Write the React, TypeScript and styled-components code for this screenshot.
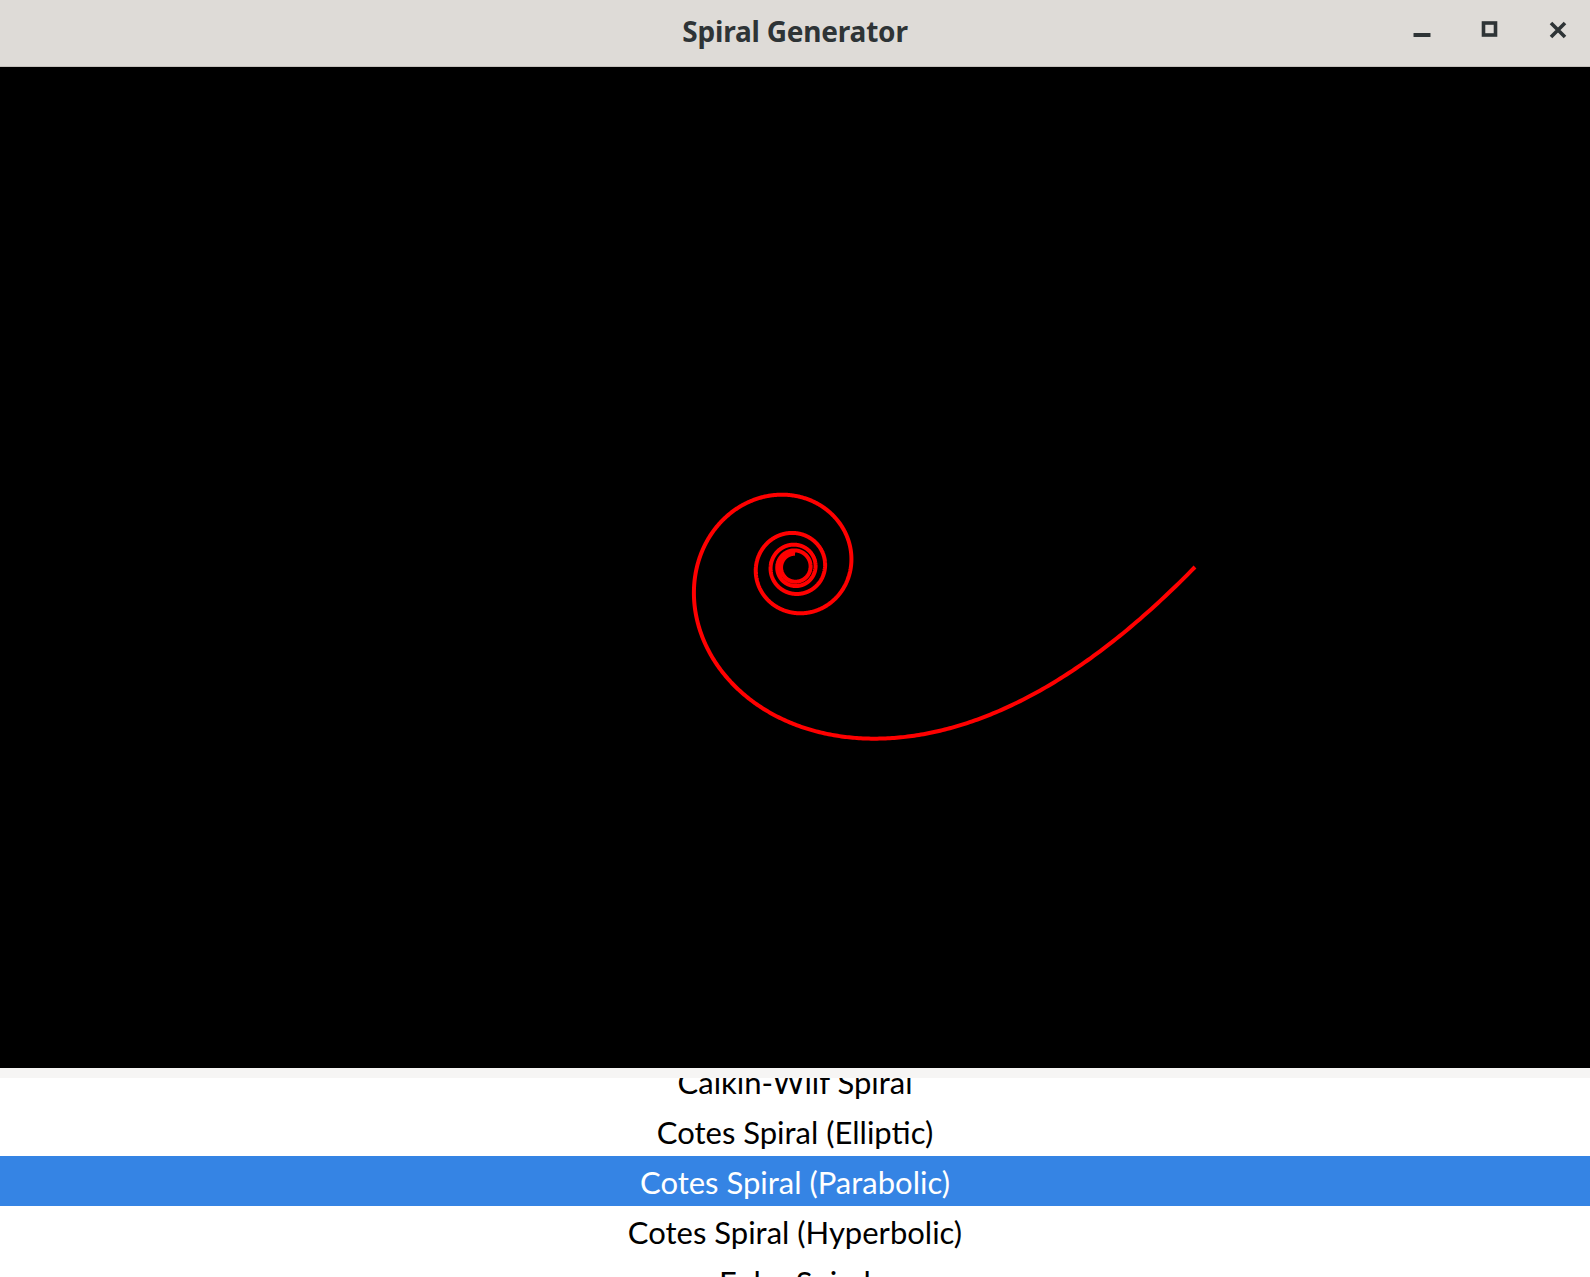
import React, { useLayoutEffect, useMemo, useRef } from "react";
import styled, { createGlobalStyle } from "styled-components";

const Global = createGlobalStyle`
  html, body { margin: 0; padding: 0; background: #ffffff; }
  body { font-family: "Noto Sans", "Open Sans", sans-serif; }
  * { box-sizing: border-box; }
`;

const Window = styled.div`
  display: flex;
  flex-direction: column;
  width: 100vw;
  height: 100vh;
  overflow: hidden;
  background: #ffffff;
`;

const TitleBar = styled.header`
  position: relative;
  flex: 0 0 67px;
  display: flex;
  align-items: center;
  justify-content: center;
  background: #dedbd7;
  border-bottom: 1px solid #c4c0bb;
`;

const Title = styled.h1`
  margin: 0;
  padding-bottom: 5px;
  font-family: "Noto Sans", "Open Sans", sans-serif;
  font-weight: 700;
  font-size: 28px;
  letter-spacing: -0.2px;
  color: #2e3436;
`;

const Controls = styled.div`
  position: absolute;
  right: 14px;
  top: 0;
  bottom: 0;
  display: flex;
  align-items: center;
  gap: 32px;
  padding-bottom: 6px;
`;

const ControlButton = styled.button`
  width: 36px;
  height: 36px;
  display: flex;
  align-items: center;
  justify-content: center;
  border: none;
  background: transparent;
  padding: 0;
  color: #2e3436;
`;

const Canvas = styled.main`
  flex: 0 0 1001px;
  background: #000000;
  display: flex;
`;

const SpiralSvg = styled.svg`
  width: 100%;
  height: 100%;
  display: block;
`;

const Separator = styled.div`
  flex: 0 0 10px;
  background: #f6f5f4;
`;

const ListView = styled.ul`
  flex: 1 1 auto;
  margin: 0;
  padding: 0;
  list-style: none;
  overflow: hidden;
  background: #ffffff;
`;

const Row = styled.li<{ $selected?: boolean }>`
  height: 50px;
  display: flex;
  align-items: center;
  justify-content: center;
  font-family: "Lato", "Noto Sans", sans-serif;
  font-size: 31px;
  color: ${(p) => (p.$selected ? "#ffffff" : "#000000")};
  background: ${(p) => (p.$selected ? "#3584e4" : "#ffffff")};
  padding-top: 2px;
`;

const spirals = [
  "Archimedean Spiral",
  "Boerdijk-Coxeter Spiral",
  "Calkin-Wilf Spiral",
  "Cotes Spiral (Elliptic)",
  "Cotes Spiral (Parabolic)",
  "Cotes Spiral (Hyperbolic)",
  "Euler Spiral",
  "Fermat Spiral",
  "Fibonacci Spiral",
  "Hyperbolic Spiral",
  "Lituus",
  "Logarithmic Spiral",
];

function spiralPath(cx: number, cy: number): string {
  const pts: string[] = [];
  const maxT = 29.85;
  const steps = 3000;
  for (let i = 0; i <= steps; i++) {
    const t = (maxT * i) / steps;
    const r = 1 / (0.0025 + 0.00245 * t);
    const x = cx + r * Math.cos(t);
    const y = cy + r * Math.sin(t);
    pts.push(`${i === 0 ? "M" : "L"}${x.toFixed(2)} ${y.toFixed(2)}`);
  }
  return pts.join(" ");
}

export default function App() {
  const listRef = useRef<HTMLUListElement>(null);
  const d = useMemo(() => spiralPath(795, 500), []);

  useLayoutEffect(() => {
    if (listRef.current) listRef.current.scrollTop = 122;
  }, []);

  return (
    <Window>
      <Global />
      <TitleBar>
        <Title>Spiral Generator</Title>
        <Controls>
          <ControlButton aria-label="Minimize">
            <svg width="18" height="18" viewBox="0 0 18 18">
              <rect x="0.5" y="12" width="17" height="4" rx="0.5" fill="currentColor" />
            </svg>
          </ControlButton>
          <ControlButton aria-label="Maximize">
            <svg width="18" height="18" viewBox="0 0 18 18">
              <rect x="2.5" y="2" width="12" height="12" fill="none" stroke="currentColor" strokeWidth="3.6" />
            </svg>
          </ControlButton>
          <ControlButton aria-label="Close">
            <svg width="18" height="18" viewBox="0 0 18 18">
              <path d="M2 2 L16 16 M16 2 L2 16" stroke="currentColor" strokeWidth="3.6" strokeLinecap="butt" />
            </svg>
          </ControlButton>
        </Controls>
      </TitleBar>
      <Canvas>
        <SpiralSvg viewBox="0 0 1590 1001" preserveAspectRatio="xMidYMid meet">
          <path d={d} fill="none" stroke="#ff0000" strokeWidth="4" strokeLinejoin="round" />
        </SpiralSvg>
      </Canvas>
      <Separator />
      <ListView ref={listRef}>
        {spirals.map((s) => (
          <Row key={s} $selected={s === "Cotes Spiral (Parabolic)"}>
            {s}
          </Row>
        ))}
      </ListView>
    </Window>
  );
}
